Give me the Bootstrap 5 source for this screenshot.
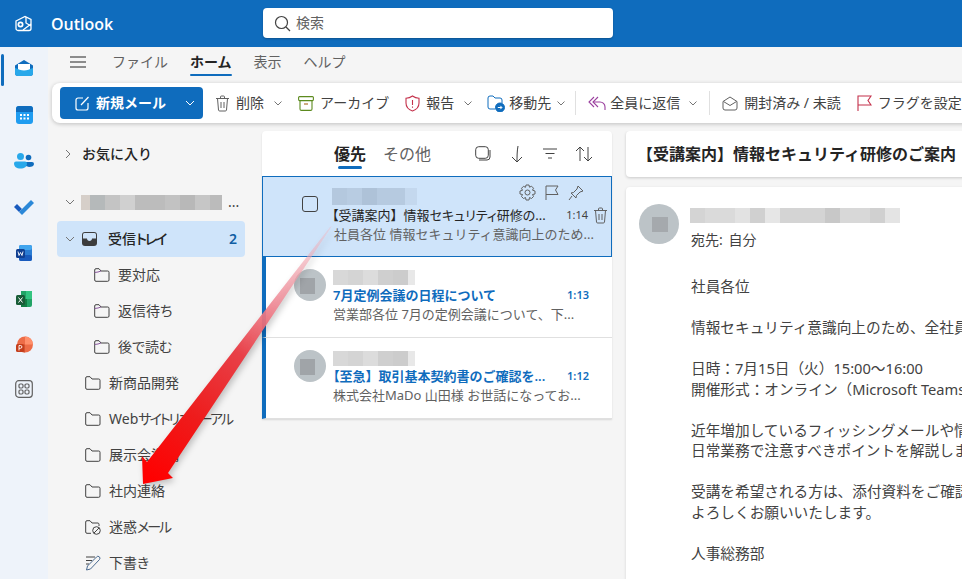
<!DOCTYPE html>
<html lang="ja">

<head>
    <meta charset="UTF-8">
    <meta name="viewport" content="width=device-width, initial-scale=1.0">
    <title>Outlook</title>
    <link href="https://cdn.jsdelivr.net/npm/bootstrap@5.3.0/dist/css/bootstrap.min.css" rel="stylesheet">
    <script src="https://cdn.jsdelivr.net/npm/bootstrap@5.3.0/dist/js/bootstrap.bundle.min.js"></script>
    <style>
        html, body { height: 100%; }
        body {
            width: 962px; height: 579px; overflow: hidden; position: relative;
            background: #f5f5f5; color: #242424;
            font-family: "Noto Sans", "Noto Sans CJK JP", sans-serif; font-size: 14px; line-height: 20px;
        }
        svg { display: block; flex: none; }
        .ol-top { height: 47px; background: #0f6cbd; color: #fff; }
        .ol-logo { width: 48px; padding-left: 15px; }
        .ol-brand { font-size: 16px; font-weight: 600; width: 215px; padding-left: 3px; font-family: "Open Sans", sans-serif; }
        .ol-search { width: 350px; height: 30px; margin-top: -1px; background: #fff; border-radius: 4px; color: #616161; padding-left: 11px; gap: 5px; font-size: 14px; box-shadow: 0 1px 2px rgba(0,0,0,.25); }
        .ol-main { height: 532px; }
        .ol-rail { width: 48px; background: #eef3fa; position: relative; }
        .ol-rail-item { height: 46px; }
        .ol-rail-first { height: 45px; padding-bottom: 3px; }
        .ol-rail-mark { position: absolute; left: 1px; top: 7px; width: 3px; height: 32px; background: #0f6cbd; border-radius: 2px; }
        .ol-rail-apps { height: 42px; }
        .ol-work { width: 914px; min-width: 0; }
        .ol-tabs { height: 36px; padding-left: 22px; padding-bottom: 6px; color: #616161; }
        .ol-burger { width: 42px; }
        .ol-tab { position: relative; margin-right: 22px; white-space: nowrap; }
        .ol-tab-on { color: #242424; font-weight: 700; }
        .ol-tab-on::after { content: ""; position: absolute; left: 0; right: 0; bottom: -4px; height: 2px; background: #0f6cbd; border-radius: 2px; }
        .ol-ribbon { height: 40px; width: 930px; margin-left: 4px; background: #fff; border-radius: 8px; box-shadow: 0 1px 4px rgba(0,0,0,.22); padding-left: 8px; white-space: nowrap; color: #424242; }
        .ol-new { width: 143px; height: 32px; background: #0f6cbd; color: #fff; border-radius: 4px; font-weight: 600; padding-left: 15px; margin-right: 12px; flex: none; }
        .ol-new-text { width: 95px; padding-left: 6px; }
        .ol-rb { gap: 6px; flex: none; }
        .ol-gap-narrow { gap: 4px; }
        .ol-after-l { margin-right: 16px; }
        .ol-after-m { margin-right: 15px; }
        .ol-after-s { margin-right: 10px; }
        .ol-after-sep { margin-right: 12px; }
        .ol-chev-s { margin-left: 4px; }
        .ol-chev-t { margin-left: 2px; }
        .ol-chev-m { margin-left: 5px; }
        .ol-sep { width: 1px; height: 24px; background: #e0e0e0; flex: none; }
        .ol-panes { height: 456px; padding-top: 8px; }
        .ol-folders { width: 214px; padding-left: 9px; flex: none; }
        .ol-row { height: 36px; white-space: nowrap; color: #424242; font-feature-settings: "palt"; }
        .ol-kana { letter-spacing: -2px; }
        .ol-row-fav { height: 46px; color: #242424; font-weight: 500; padding-left: 8px; gap: 11px; font-feature-settings: normal; }
        .ol-row-acct { margin-top: 6px; padding-left: 8px; gap: 6px; height: 38px; }
        .ol-row-inbox { background: #cfe4fa; border-radius: 4px; width: 188px; padding: 0 8px; color: #242424; font-weight: 500; gap: 7px; }
        .ol-count { margin-left: auto; color: #115ea3; font-weight: 600; }
        .ol-row-sub { padding-left: 37px; gap: 8px; }
        .ol-row-top { padding-left: 28px; gap: 8px; }
        .ol-pix-acct { width: 141px; height: 15px; background: linear-gradient(90deg, #d6cfc9 0 9px, #b5b9ba 9px 24px, #c4c4c4 24px 39px, #d0d0d0 39px 54px, #bcbcbc 54px 84px, #c2c2c2 84px 99px, #b8b8b8 99px 114px, #c6c6c6 114px 129px, #bbb 129px 141px); }
        .ol-list { width: 350px; height: 288px; background: #fff; border-radius: 4px 4px 0 0; box-shadow: 0 1px 2px rgba(0,0,0,.12); flex: none; }
        .ol-list-head { height: 45px; padding-left: 72px; padding-right: 19px; font-size: 16px; }
        .ol-focus { position: relative; font-weight: 700; margin-right: 17px; }
        .ol-focus::after { content: ""; position: absolute; left: 4px; right: 4px; bottom: -5px; height: 3px; border-radius: 2px; background: #0f6cbd; }
        .ol-other { color: #616161; }
        .ol-tools { margin-left: auto; gap: 20px; }
        .ol-sort { margin-left: -2px; }
        .ol-mail { height: 81px; position: relative; border-bottom: 1px solid #e0e0e0; border-left: 4px solid #0f6cbd; }
        .ol-mail-sel { background: #cfe4fa; border: 1px solid #0f6cbd; }
        .ol-face { position: absolute; left: 28px; top: 12px; width: 32px; height: 32px; border-radius: 50%; background: #bcc3c7; }
        .ol-face::after { content: ""; position: absolute; left: 6px; top: 9px; width: 15px; height: 16px; background: #a0a4a8; }
        .ol-check { position: absolute; left: 39px; top: 19px; width: 16px; height: 16px; border: 1px solid #424242; border-radius: 3px; }
        .ol-pix-name { position: absolute; left: 67px; top: 13px; width: 82px; height: 15px; background: linear-gradient(90deg, #d8d8d8 0 15px, #d4d4d4 15px 30px, #dcdcdc 30px 45px, #cfcfcf 45px 60px, #cccccc 60px 75px, #e8e8e8 75px 82px); }
        .ol-mail-sel .ol-pix-name { left: 69px; top: 11px; height: 17px; background: linear-gradient(90deg, #b4c8de 0 15px, #b8cce2 15px 30px, #aec2d8 30px 45px, #b6cae0 45px 73px, #c4d8ee 73px 85px); width: 85px; }
        .ol-subj, .ol-prev { position: absolute; left: 67px; white-space: nowrap; font-size: 13px; line-height: 18px; }
        .ol-subj { top: 29px; color: #0f6cbd; font-weight: 600; }
        .ol-mail-sel .ol-subj { left: 69px; color: #242424; font-weight: 400; }
        .ol-tight { font-feature-settings: "palt"; }
        .ol-prev { top: 48px; color: #616161; }
        .ol-mail-sel .ol-prev { left: 71px; }
        .ol-time { position: absolute; right: 23px; top: 29px; font-size: 11px; line-height: 18px; color: #0f6cbd; font-weight: 600; }
        .ol-mail-sel .ol-time { color: #424242; font-weight: 400; }
        .ol-acts { position: absolute; right: 27px; top: 7px; gap: 9px; }
        .ol-bin { position: absolute; right: 3px; top: 30px; }
        .ol-read { padding-left: 14px; width: 350px; overflow: hidden; flex: none; }
        .ol-read-head { height: 46px; width: 400px; background: #fff; border-radius: 4px; box-shadow: 0 1px 3px rgba(0,0,0,.18); font-size: 16px; font-weight: 600; padding-left: 11px; margin-bottom: 10px; white-space: nowrap; }
        .ol-read-body { width: 400px; height: 420px; background: #fff; border-radius: 4px; box-shadow: 0 1px 3px rgba(0,0,0,.14); position: relative; }
        .ol-read-face { position: absolute; left: 13px; top: 17px; width: 40px; height: 40px; border-radius: 50%; background: #bcc3c7; }
        .ol-read-face::after { content: ""; position: absolute; left: 13px; top: 13px; width: 16px; height: 15px; background: #a5a9ad; }
        .ol-pix-from { position: absolute; left: 64px; top: 21px; width: 210px; height: 15px; background: linear-gradient(90deg, #d4d4d4 0 15px, #dadada 15px 45px, #e2e2e2 45px 60px, #d0d0d0 60px 75px, #e6e6e6 75px 90px, #d4d4d4 90px 135px, #c8c8c8 135px 150px, #d8d8d8 150px 180px, #d0d0d0 180px 195px, #e4e4e4 195px 210px); }
        .ol-to { position: absolute; left: 65px; top: 43px; color: #424242; white-space: nowrap; word-spacing: 2px; }
        .ol-text { position: absolute; left: 65px; top: 89px; white-space: nowrap; font-size: 14.67px; line-height: 20.5px; color: #424242; }
        .ol-arrow { position: absolute; left: 0; top: 0; pointer-events: none; filter: drop-shadow(2px 3px 3px rgba(0,0,0,.22)); }
    </style>
</head>

<body>
    <div class="ol-top d-flex align-items-center">
        <div class="ol-logo">
            <svg width="17" height="17" viewBox="0 0 17 17" fill="none" stroke="#fff" stroke-width="1.3"><path d="M1 6l9-4.500 6 3v9a2 2 0 0 1-2 2H3a2 2 0 0 1-2-2z"/><path d="M11 2v6l5 3M8 15l8-6"/><circle cx="5.500" cy="9.500" r="3" fill="#fff" stroke="none"/><circle cx="5.500" cy="9.500" r="1.200" fill="#0f6cbd" stroke="none"/></svg>
        </div>
        <div class="ol-brand">Outlook</div>
        <div class="ol-search d-flex align-items-center">
            <svg width="17" height="17" viewBox="0 0 17 17" fill="none" stroke="#424242" stroke-width="1.2"><circle cx="7.500" cy="7.500" r="6"/><path d="M12 12l4 4"/></svg>
            <span>検索</span>
        </div>
    </div>

    <div class="ol-main d-flex">
        <div class="ol-rail">
            <div class="ol-rail-mark"></div>
            <div class="ol-rail-item ol-rail-first d-flex align-items-center justify-content-center">
                <svg width="20" height="18" viewBox="0 0 20 18"><path d="M1 6.500L10 1l9 5.500V14a3 3 0 0 1-3 3H4a3 3 0 0 1-3-3z" fill="#0f6cbd"/><path d="M4 5h12v6l-6 2-6-2z" fill="#fff"/><path d="M1 9c3 1 6 2.500 9 2.500S16 10 19 9v5a3 3 0 0 1-3 3H4a3 3 0 0 1-3-3z" fill="#28a8ea"/></svg>
            </div>
            <div class="ol-rail-item d-flex align-items-center justify-content-center">
                <svg width="17" height="18" viewBox="0 0 17 18"><rect x="0" y="0" width="17" height="18" rx="3" fill="#1f9cf0"/><path d="M0 3a3 3 0 0 1 3-3h11a3 3 0 0 1 3 3v3H0z" fill="#0f6cbd"/><g fill="#fff"><rect x="4" y="8" width="2" height="2"/><rect x="7.500" y="8" width="2" height="2"/><rect x="11" y="8" width="2" height="2"/><rect x="4" y="11.500" width="2" height="2"/><rect x="7.500" y="11.500" width="2" height="2"/><rect x="11" y="11.500" width="2" height="2"/></g></svg>
            </div>
            <div class="ol-rail-item d-flex align-items-center justify-content-center">
                <svg width="20" height="18" viewBox="0 0 20 18"><circle cx="6.500" cy="4.500" r="3.500" fill="#28a8ea"/><circle cx="14.500" cy="5.500" r="2.800" fill="#0f6cbd"/><path d="M12 10h6a2 2 0 0 1 2 2c0 2-2 3-5 3l-3-1z" fill="#0f6cbd"/><path d="M2 9.500h9a2 2 0 0 1 2 2c0 3-2.500 5-6.500 5S0 14.500 0 11.500a2 2 0 0 1 2-2z" fill="#28a8ea"/></svg>
            </div>
            <div class="ol-rail-item d-flex align-items-center justify-content-center">
                <svg width="20" height="16" viewBox="0 0 20 16"><path d="M0 8l3-3 5 5-3 3z" fill="#185abd"/><path d="M5 13L17 1l3 3L8 16z" fill="#2b88d8"/></svg>
            </div>
            <div class="ol-rail-item d-flex align-items-center justify-content-center">
                <svg width="18" height="18" viewBox="0 0 18 18"><rect x="4" y="1" width="13" height="16" rx="2" fill="#2b7cd3"/><rect x="4" y="1" width="13" height="5" rx="2" fill="#41a5ee"/><rect x="4" y="11" width="13" height="6" rx="2" fill="#185abd"/><rect x="1" y="5" width="9" height="9" rx="1.500" fill="#103f91"/><path d="M3 7.500l1 4 1.500-3 1.500 3 1-4" stroke="#fff" stroke-width=".9" fill="none"/></svg>
            </div>
            <div class="ol-rail-item d-flex align-items-center justify-content-center">
                <svg width="18" height="18" viewBox="0 0 18 18"><path d="M6 1h9a2 2 0 0 1 2 2v12a2 2 0 0 1-2 2H6z" fill="#21a366"/><rect x="11" y="1" width="6" height="8" fill="#33c481"/><rect x="6" y="9" width="6" height="8" fill="#107c41"/><rect x="1" y="5" width="9" height="10" rx="1.500" fill="#185c37"/><path d="M3.500 7.500l4 5m0-5l-4 5" stroke="#fff" stroke-width="1"/></svg>
            </div>
            <div class="ol-rail-item d-flex align-items-center justify-content-center">
                <svg width="18" height="18" viewBox="0 0 18 18"><circle cx="10" cy="8.500" r="8" fill="#ed6c47"/><path d="M10 .5a8 8 0 0 1 8 8h-8z" fill="#ff8f6b"/><path d="M2 8.500h8v8a8 8 0 0 1-8-8z" fill="#d35230"/><rect x="1" y="8" width="8" height="8" rx="1.500" fill="#c43e1c"/><path d="M4 14.500v-5h1.500a1.300 1.300 0 0 1 0 2.800H4" stroke="#fff" stroke-width=".9" fill="none"/></svg>
            </div>
            <div class="ol-rail-apps d-flex align-items-center justify-content-center">
                <svg width="18" height="18" viewBox="0 0 18 18" fill="none" stroke="#616161" stroke-width="1.200"><rect x=".7" y=".7" width="16.600" height="16.600" rx="3"/><rect x="4" y="4" width="4" height="4" rx="1.200"/><rect x="10" y="4" width="4" height="4" rx="1.200"/><rect x="4" y="10" width="4" height="4" rx="1.200"/><rect x="10" y="10" width="4" height="4" rx="1.200"/></svg>
            </div>
        </div>

        <div class="ol-work">
            <div class="ol-tabs d-flex align-items-center">
                <div class="ol-burger">
                    <svg width="16" height="12" viewBox="0 0 16 12" stroke="#242424" stroke-width="1.100"><path d="M0 1h16M0 6h16M0 11h16"/></svg>
                </div>
                <span class="ol-tab">ファイル</span>
                <span class="ol-tab ol-tab-on">ホーム</span>
                <span class="ol-tab">表示</span>
                <span class="ol-tab">ヘルプ</span>
            </div>

            <div class="ol-ribbon d-flex align-items-center">
                <div class="ol-new d-flex align-items-center">
                    <svg width="15" height="15" viewBox="0 0 15 15" fill="none" stroke="#fff" stroke-width="1.200"><path d="M8 2H3a2 2 0 0 0-2 2v8a2 2 0 0 0 2 2h8a2 2 0 0 0 2-2V7"/><path d="M6 9l7.500-8"/></svg>
                    <span class="ol-new-text">新規メール</span>
                    <svg width="10" height="6" viewBox="0 0 10 6" fill="none" stroke="#fff"><path d="M1 1l4 4 4-4"/></svg>
                </div>
                <div class="ol-rb ol-after-l d-flex align-items-center">
                    <svg width="15" height="17" viewBox="0 0 15 17" fill="none" stroke="#616161"><path d="M1 3.500h13M5.500 3.500V2a1 1 0 0 1 1-1h2a1 1 0 0 1 1 1v1.500M2.500 3.500l1 11.500a1.200 1.200 0 0 0 1.200 1h5.600a1.200 1.200 0 0 0 1.200-1l1-11.500M6 7v6M9 7v6"/></svg>
                    <span>削除</span>
                    <svg class="ol-chev-s" width="8" height="5" viewBox="0 0 8 5" fill="none" stroke="#757575"><path d="M.5.500L4 4 7.500.500"/></svg>
                </div>
                <div class="ol-rb ol-after-l d-flex align-items-center">
                    <svg width="16" height="15" viewBox="0 0 16 15" fill="none" stroke="#5c8a1e" stroke-width="1.100"><rect x=".6" y=".6" width="14.800" height="4" rx="1"/><path d="M2 4.600V13a1.400 1.400 0 0 0 1.400 1.400h9.200A1.400 1.400 0 0 0 14 13V4.600"/><path d="M6 8h4" stroke="#a8641a"/></svg>
                    <span>アーカイブ</span>
                </div>
                <div class="ol-rb ol-after-m d-flex align-items-center">
                    <svg width="15" height="17" viewBox="0 0 15 17" fill="none" stroke="#c4314b" stroke-width="1.100"><path d="M7.500 1c2 1.500 4 2.200 6.500 2.200V8c0 4-3 6.800-6.500 8C4 14.800 1 12 1 8V3.200C3.500 3.200 5.500 2.500 7.500 1z"/><path d="M7.500 5v5M7.500 11.500v1.200"/></svg>
                    <span>報告</span>
                    <svg class="ol-chev-s" width="8" height="5" viewBox="0 0 8 5" fill="none" stroke="#757575"><path d="M.5.500L4 4 7.500.500"/></svg>
                </div>
                <div class="ol-rb ol-gap-narrow ol-after-s d-flex align-items-center">
                    <svg width="18" height="17" viewBox="0 0 18 17" fill="none" stroke="#0f6cbd"><path d="M8 14H3a2 2 0 0 1-2-2V3a2 2 0 0 1 2-2h3l2 2h5a2 2 0 0 1 2 2v3"/><circle cx="13" cy="12.500" r="4.500" fill="#0f6cbd"/><path d="M10.800 12.500h4M13.300 10.800l1.600 1.700-1.600 1.700" stroke="#fff"/></svg>
                    <span>移動先</span>
                    <svg class="ol-chev-t" width="8" height="5" viewBox="0 0 8 5" fill="none" stroke="#757575"><path d="M.5.500L4 4 7.500.500"/></svg>
                </div>
                <div class="ol-sep ol-after-sep"></div>
                <div class="ol-rb ol-gap-narrow ol-after-sep d-flex align-items-center">
                    <svg width="18" height="15" viewBox="0 0 18 15" fill="none" stroke="#9a3f9e" stroke-width="1.100"><path d="M6 1L1 6l5 5M10 1L5 6l5 5"/><path d="M5 6h7a5 5 0 0 1 5 5v3"/></svg>
                    <span>全員に返信</span>
                    <svg class="ol-chev-m" width="8" height="5" viewBox="0 0 8 5" fill="none" stroke="#757575"><path d="M.5.500L4 4 7.500.500"/></svg>
                </div>
                <div class="ol-sep ol-after-sep"></div>
                <div class="ol-rb ol-after-l d-flex align-items-center">
                    <svg width="16" height="15" viewBox="0 0 16 15" fill="none" stroke="#616161"><path d="M1 5.500L8 1l7 4.500V12a2 2 0 0 1-2 2H3a2 2 0 0 1-2-2z"/><path d="M1.500 5.500L8 9.500l6.500-4"/></svg>
                    <span>開封済み / 未読</span>
                </div>
                <div class="ol-rb d-flex align-items-center">
                    <svg width="15" height="16" viewBox="0 0 15 16" fill="none" stroke="#c4314b" stroke-width="1.100"><path d="M1 16V1h13l-3 4.500L14 10H1"/></svg>
                    <span>フラグを設定</span>
                </div>
            </div>

            <div class="ol-panes d-flex">
                <div class="ol-folders">
                    <div class="ol-row ol-row-fav d-flex align-items-center">
                        <svg width="6" height="10" viewBox="0 0 6 10" fill="none" stroke="#757575"><path d="M1 1l4 4-4 4"/></svg>
                        <span>お気に入り</span>
                    </div>
                    <div class="ol-row ol-row-acct d-flex align-items-center">
                        <svg width="10" height="6" viewBox="0 0 10 6" fill="none" stroke="#757575"><path d="M1 1l4 4 4-4"/></svg>
                        <div class="ol-pix-acct"></div><span>...</span>
                    </div>
                    <div class="ol-row ol-row-inbox d-flex align-items-center">
                        <svg width="10" height="6" viewBox="0 0 10 6" fill="none" stroke="#757575"><path d="M1 1l4 4 4-4"/></svg>
                        <svg width="15" height="14" viewBox="0 0 15 14"><rect width="15" height="14" rx="3" fill="#3d3d3d"/><path d="M1 2.500A1.500 1.500 0 0 1 2.500 1h10A1.500 1.500 0 0 1 14 2.500V6.500H10c0 1.500-1 2.500-2.500 2.500S5 8 5 6.500H1z" fill="#cfe4fa"/></svg>
                        <span class="ms-1">受信<span class="ol-kana">トレイ</span></span>
                        <span class="ol-count">2</span>
                    </div>
                    <div class="ol-row ol-row-sub d-flex align-items-center"><svg width="16" height="14" viewBox="0 0 16 14" fill="none" stroke="#424242"><path d="M.7 12V2A1.300 1.300 0 0 1 2 .7h3L7 3h6.700A1.300 1.300 0 0 1 15 4.300V12a1.300 1.300 0 0 1-1.300 1.300H2A1.300 1.300 0 0 1 .7 12z"/><path d="M.7 4.500L4 4l3-1" stroke="#8a5a9e"/></svg><span>要対応</span></div>
                    <div class="ol-row ol-row-sub d-flex align-items-center"><svg width="16" height="14" viewBox="0 0 16 14" fill="none" stroke="#424242"><path d="M.7 12V2A1.300 1.300 0 0 1 2 .7h3L7 3h6.700A1.300 1.300 0 0 1 15 4.300V12a1.300 1.300 0 0 1-1.300 1.300H2A1.300 1.300 0 0 1 .7 12z"/><path d="M.7 4.500L4 4l3-1" stroke="#8a5a9e"/></svg><span>返信待ち</span></div>
                    <div class="ol-row ol-row-sub d-flex align-items-center"><svg width="16" height="14" viewBox="0 0 16 14" fill="none" stroke="#424242"><path d="M.7 12V2A1.300 1.300 0 0 1 2 .7h3L7 3h6.700A1.300 1.300 0 0 1 15 4.300V12a1.300 1.300 0 0 1-1.300 1.300H2A1.300 1.300 0 0 1 .7 12z"/><path d="M.7 4.500L4 4l3-1" stroke="#8a5a9e"/></svg><span>後で読む</span></div>
                    <div class="ol-row ol-row-top d-flex align-items-center"><svg width="16" height="14" viewBox="0 0 16 14" fill="none" stroke="#424242"><path d="M.7 12V2A1.300 1.300 0 0 1 2 .7h3L7 3h6.700A1.300 1.300 0 0 1 15 4.300V12a1.300 1.300 0 0 1-1.300 1.300H2A1.300 1.300 0 0 1 .7 12z"/></svg><span>新商品開発</span></div>
                    <div class="ol-row ol-row-top d-flex align-items-center"><svg width="16" height="14" viewBox="0 0 16 14" fill="none" stroke="#424242"><path d="M.7 12V2A1.300 1.300 0 0 1 2 .7h3L7 3h6.700A1.300 1.300 0 0 1 15 4.300V12a1.300 1.300 0 0 1-1.300 1.300H2A1.300 1.300 0 0 1 .7 12z"/></svg><span>Web<span class="ol-kana">サイトリニューアル</span></span></div>
                    <div class="ol-row ol-row-top d-flex align-items-center"><svg width="16" height="14" viewBox="0 0 16 14" fill="none" stroke="#424242"><path d="M.7 12V2A1.300 1.300 0 0 1 2 .7h3L7 3h6.700A1.300 1.300 0 0 1 15 4.300V12a1.300 1.300 0 0 1-1.300 1.300H2A1.300 1.300 0 0 1 .7 12z"/></svg><span>展示会準備</span></div>
                    <div class="ol-row ol-row-top d-flex align-items-center"><svg width="16" height="14" viewBox="0 0 16 14" fill="none" stroke="#424242"><path d="M.7 12V2A1.300 1.300 0 0 1 2 .7h3L7 3h6.700A1.300 1.300 0 0 1 15 4.300V12a1.300 1.300 0 0 1-1.300 1.300H2A1.300 1.300 0 0 1 .7 12z"/></svg><span>社内連絡</span></div>
                    <div class="ol-row ol-row-top d-flex align-items-center"><svg width="16" height="15" viewBox="0 0 16 15" fill="none" stroke="#424242"><path d="M6 13.300H2A1.300 1.300 0 0 1 .7 12V2A1.300 1.300 0 0 1 2 .7h3L7 3h6A1.300 1.300 0 0 1 14 4.300V6"/><circle cx="11.500" cy="10.500" r="3.800"/><path d="M9 13l5-5"/></svg><span>迷惑<span class="ol-kana">メール</span></span></div>
                    <div class="ol-row ol-row-top d-flex align-items-center"><svg width="16" height="16" viewBox="0 0 16 16" fill="none" stroke="#424242"><path d="M1 2h9M1 5.500h6M1 9h3"/><path d="M1.500 15l1-4 9-9a1.700 1.700 0 0 1 3 2.500l-9 9.500z" stroke="#4a6a90"/></svg><span>下書き</span></div>
                </div>

                <div class="ol-list">
                    <div class="ol-list-head d-flex align-items-center">
                        <span class="ol-focus">優先</span>
                        <span class="ol-other">その他</span>
                        <div class="ol-tools d-flex align-items-center">
                            <svg width="16" height="15" viewBox="0 0 16 15" fill="none" stroke="#424242"><rect x=".7" y=".7" width="12.600" height="11.600" rx="3"/><path d="M15 4v7a3 3 0 0 1-3 3H4"/></svg>
                            <svg width="12" height="18" viewBox="0 0 12 18" fill="none" stroke="#424242"><path d="M7 1C6 6 6 12 6 17M1 12l5 5 5-5"/></svg>
                            <svg width="14" height="11" viewBox="0 0 14 11" fill="none" stroke="#424242"><path d="M0 1h14M2.500 5.500h9M5 10h4"/></svg>
                            <svg class="ol-sort" width="18" height="16" viewBox="0 0 18 16" fill="none" stroke="#424242"><path d="M5 15V1M1 5l4-4 4 4M13 1v14M9 11l4 4 4-4"/></svg>
                        </div>
                    </div>
                    <div class="ol-mail ol-mail-sel">
                        <div class="ol-check"></div>
                        <div class="ol-pix-name"></div>
                        <div class="ol-acts d-flex align-items-center">
                            <svg width="17" height="17" viewBox="0 0 17 17" fill="none" stroke="#616161"><circle cx="8.500" cy="8.500" r="2.500"/><path d="M7 1h3l.5 2.200 2-1 2 2-1 2L16 7v3l-2.500.5 1 2-2 2-2-1L10 16H7l-.5-2.500-2 1-2-2 1-2L1 10V7l2.500-.7-1-2 2-2 2 1z"/></svg>
                            <svg width="14" height="15" viewBox="0 0 14 15" fill="none" stroke="#616161"><path d="M1 15V1h12l-2.500 4L13 9.500H1"/></svg>
                            <svg width="16" height="16" viewBox="0 0 16 16" fill="none" stroke="#616161"><path d="M10 1l5 5-3 1-3.500 3.500-.5 2.500-5-5 2.500-.5L9 4z"/><path d="M4 11l-3 4"/></svg>
                        </div>
                        <div class="ol-subj"><span class="ol-tight">【</span>受講案内】<span class="ol-tight">情報セキュリティ研修の...</span></div>
                        <div class="ol-time">1:14</div>
                        <svg class="ol-bin" width="15" height="17" viewBox="0 0 15 17" fill="none" stroke="#616161"><path d="M1 3.500h13M5.500 3.500V2a1 1 0 0 1 1-1h2a1 1 0 0 1 1 1v1.500M2.500 3.500l1 11.500a1.200 1.200 0 0 0 1.200 1h5.600a1.200 1.200 0 0 0 1.200-1l1-11.500M6 7v6M9 7v6"/></svg>
                        <div class="ol-prev">社員各位 情報セキュリティ意識向上のため...</div>
                    </div>
                    <div class="ol-mail">
                        <div class="ol-face"></div>
                        <div class="ol-pix-name"></div>
                        <div class="ol-subj">7月定例会議の日程について</div>
                        <div class="ol-time">1:13</div>
                        <div class="ol-prev">営業部各位 7月の定例会議について、下...</div>
                    </div>
                    <div class="ol-mail">
                        <div class="ol-face"></div>
                        <div class="ol-pix-name"></div>
                        <div class="ol-subj"><span class="ol-tight">【</span>至急】取引基本契約書のご確認を...</div>
                        <div class="ol-time">1:12</div>
                        <div class="ol-prev">株式会社MaDo 山田様 お世話になってお...</div>
                    </div>
                </div>

                <div class="ol-read">
                    <div class="ol-read-head d-flex align-items-center">【受講案内】情報セキュリティ研修のご案内</div>
                    <div class="ol-read-body">
                        <div class="ol-read-face"></div>
                        <div class="ol-pix-from"></div>
                        <div class="ol-to">宛先: 自分</div>
                        <div class="ol-text">社員各位<br><br>情報セキュリティ意識向上のため、全社員を対象とした研修を実施します。<br><br>日時：7月15日（火）15:00～16:00<br>開催形式：オンライン（Microsoft Teams）<br><br>近年増加しているフィッシングメールや情報漏えいの事例をもとに、<br>日常業務で注意すべきポイントを解説します。<br><br>受講を希望される方は、添付資料をご確認のうえ、<br>よろしくお願いいたします。<br><br>人事総務部</div>
                    </div>
                </div>
            </div>
        </div>
    </div>

    <svg class="ol-arrow" width="962" height="579" viewBox="0 0 962 579">
        <defs>
            <linearGradient id="arrowFill" gradientUnits="userSpaceOnUse" x1="330" y1="228" x2="150" y2="480">
                <stop offset="0" stop-color="#f5b4be" stop-opacity=".35"/>
                <stop offset=".3" stop-color="#f08a96" stop-opacity=".9"/>
                <stop offset=".5" stop-color="#e84048"/>
                <stop offset=".75" stop-color="#ee1c1c"/>
                <stop offset="1" stop-color="#ff0000"/>
            </linearGradient>
        </defs>
        <path d="M332 226L168 473 173 478 143 484 142 456 147 462 330 227z" fill="url(#arrowFill)"/>
    </svg>
</body>

</html>
